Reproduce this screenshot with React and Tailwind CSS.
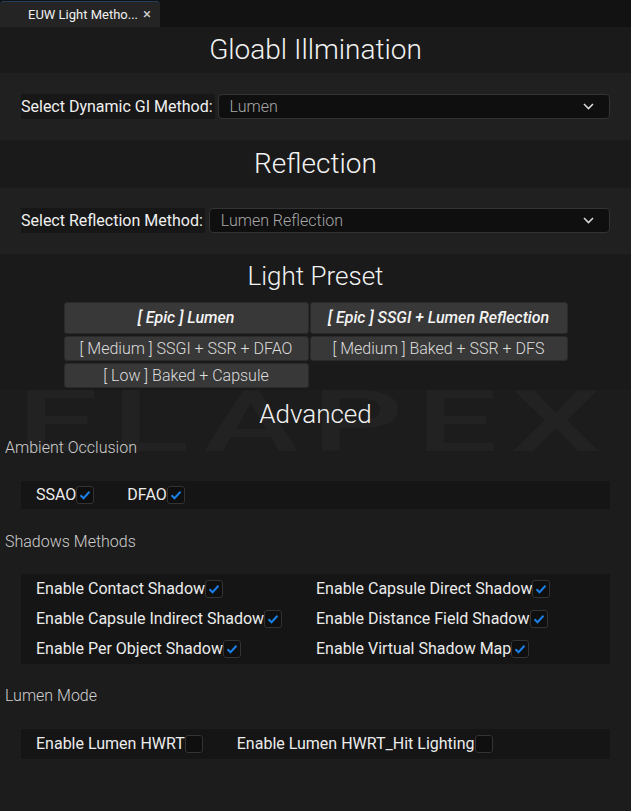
import React from "react";

const Heading = ({ title, className = "" }) => {
  return (
    <div className={`flex items-center justify-center font-light text-[#f2f2f2] ${className}`}>
      {title}
    </div>
  );
};

const Dropdown = ({ label, value, gap }) => {
  return (
    <div className="flex items-center h-[25px]">
      <div className="h-full flex items-center bg-[#171717] pr-[2px] text-[16px] text-[#f0f0f0]">
        {label}
      </div>
      <div
        className={`${gap} flex-1 h-full flex items-center justify-between bg-[#0f0f0f] border border-[#333] rounded-[4px] pl-[11px] pr-[15px] text-[16px] font-light text-[#a8a8a8]`}
      >
        <span>{value}</span>
        <svg width="11" height="7" viewBox="0 0 11 7" fill="none">
          <path d="M1 1l4.5 4.5L10 1" stroke="#d8d8d8" strokeWidth="1.6" />
        </svg>
      </div>
    </div>
  );
};

const Check = ({ checked }) => {
  return (
    <span className="inline-flex items-center justify-center w-[18px] h-[18px] bg-[#0f0f0f] border border-[#333] rounded-[3px]">
      {checked && (
        <svg width="12" height="10" viewBox="0 0 12 10" fill="none">
          <path d="M1.5 5.2l3 3L10.5 1.8" stroke="#1a7fe6" strokeWidth="2" />
        </svg>
      )}
    </span>
  );
};

const Option = ({ label, checked = true }) => {
  return (
    <div className="flex items-center text-[16px] text-[#ececec] h-[30px]">
      <span>{label}</span>
      <Check checked={checked} />
    </div>
  );
};

const SubTitle = ({ title }) => {
  return <div className="pl-[5px] text-[16px] font-light text-[#cfcfcf] h-[20px] leading-[20px]">{title}</div>;
};

const presets = [
  { name: "[ Epic ] Lumen", epic: true },
  { name: "[ Epic ] SSGI + Lumen Reflection", epic: true },
  { name: "[ Medium ] SSGI + SSR + DFAO" },
  { name: "[ Medium ] Baked + SSR + DFS" },
  { name: "[ Low ] Baked + Capsule" },
];

export default function App() {
  return (
    <div className="w-[631px] h-[811px] bg-[#1c1c1c] overflow-hidden font-['Roboto','Liberation_Sans',sans-serif]">
      <div className="h-[27px] bg-[#121212] flex items-end">
        <div className="w-[160px] h-[26px] bg-[#242424] rounded-t-[4px] border-t border-[#23405f] flex items-center pl-[28px] text-[13px] text-[#f0f0f0]">
          <span>EUW Light Metho...</span>
          <span className="ml-[5px] text-[15px] text-[#cfcfcf] leading-none">×</span>
        </div>
      </div>

      <Heading title="Gloabl Illmination" className="h-[46px] bg-[#1a1a1a] text-[28px]" />
      <div className="bg-[#202020] px-[21px] pt-[21px] h-[67px]">
        <Dropdown label="Select Dynamic GI Method:" value="Lumen" gap="ml-[3px]" />
      </div>

      <Heading title="Reflection" className="h-[48px] bg-[#1a1a1a] text-[28px]" />
      <div className="bg-[#202020] px-[21px] pt-[20px] h-[66px]">
        <Dropdown label="Select Reflection Method:" value="Lumen Reflection" gap="ml-[4px]" />
      </div>

      <Heading title="Light Preset" className="h-[45px] bg-[#1a1a1a] text-[26px]" />
      <div className="bg-[#1a1a1a] pt-[3px] pb-[2px] flex justify-center">
        <div className="grid grid-cols-[245px_258px] gap-x-[1px] gap-y-[2px] w-[504px]">
          {presets.map((p) => (
            <div
              key={p.name}
              className={`flex items-center justify-center bg-[#383838] border border-[#2a2a2a] rounded-[3px] text-[16px] ${
                p.epic ? "h-[32px] italic font-medium text-[#f4f4f4]" : "h-[25px] font-light text-[#dcdcdc]"
              }`}
            >
              {p.name}
            </div>
          ))}
        </div>
      </div>

      <div className="relative">
        <div
          aria-hidden="true"
          className="absolute left-0 right-0 top-[-3px] h-[72px] flex justify-center items-center overflow-hidden pointer-events-none select-none"
        >
          <span className="inline-block text-[90px] leading-[72px] font-medium tracking-[8px] text-[#ffffff07] scale-x-[1.6] scale-y-[0.95] origin-center">
            ELAPEX
          </span>
        </div>
        <div className="relative">
          <Heading title="Advanced" className="h-[48px] text-[26px]" />
          <SubTitle title="Ambient Occlusion" />
          <div className="mx-[21px] mt-[23px] h-[28px] bg-[#151515] flex items-center pl-[15px]">
            <div className="flex items-center text-[16px] text-[#ececec]">
              <span>SSAO</span>
              <Check checked />
            </div>
            <div className="flex items-center text-[16px] text-[#ececec] ml-[33px]">
              <span>DFAO</span>
              <Check checked />
            </div>
          </div>

          <div className="mt-[23px]">
            <SubTitle title="Shadows Methods" />
          </div>
          <div className="mx-[21px] mt-[22px] h-[90px] bg-[#151515] grid grid-cols-[280px_1fr] pl-[15px] content-center">
            <Option label="Enable Contact Shadow" />
            <Option label="Enable Capsule Direct Shadow" />
            <Option label="Enable Capsule Indirect Shadow" />
            <Option label="Enable Distance Field Shadow" />
            <Option label="Enable Per Object Shadow" />
            <Option label="Enable Virtual Shadow Map" />
          </div>

          <div className="mt-[22px]">
            <SubTitle title="Lumen Mode" />
          </div>
          <div className="mx-[21px] mt-[23px] h-[30px] bg-[#151515] flex items-center pl-[15px]">
            <Option label="Enable Lumen HWRT" checked={false} />
            <div className="ml-[34px]">
              <Option label="Enable Lumen HWRT_Hit Lighting" checked={false} />
            </div>
          </div>
        </div>
      </div>
    </div>
  );
}
